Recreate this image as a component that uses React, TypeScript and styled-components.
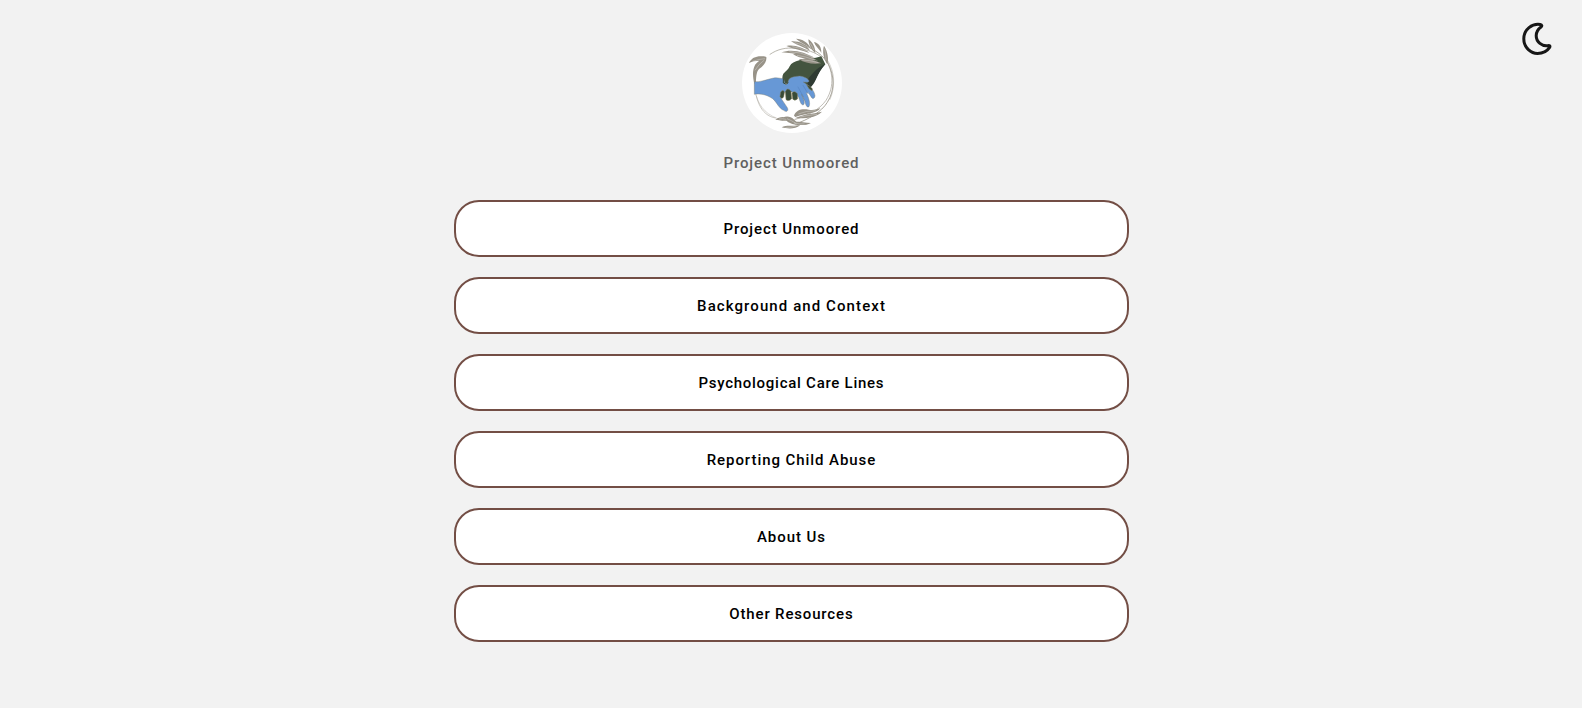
import React from "react";
import styled, { createGlobalStyle } from "styled-components";

const GlobalStyle = createGlobalStyle`
  * { box-sizing: border-box; }
  body {
    margin: 0;
    background: #f2f2f2;
    font-family: Roboto, "Liberation Sans", sans-serif;
  }
`;

const Page = styled.main`
  position: relative;
  min-height: 708px;
  display: flex;
  flex-direction: column;
  align-items: center;
  padding-top: 33px;
`;

const ThemeToggle = styled.button`
  position: absolute;
  top: 19px;
  right: 25px;
  width: 40px;
  height: 40px;
  padding: 0;
  border: 0;
  background: none;
  svg { display: block; }
`;

const Avatar = styled.div`
  width: 100px;
  height: 100px;
  margin-left: 2px;
  border-radius: 50%;
  background: #fff;
  overflow: hidden;
  svg { display: block; }
`;

const Label = styled.span<{ $spacing: number }>`
  font-size: 15px;
  font-weight: 500;
  line-height: 20px;
  letter-spacing: ${(p) => p.$spacing}px;
  margin-right: ${(p) => -p.$spacing}px;
  white-space: nowrap;
`;

const Title = styled.h1`
  display: flex;
  margin: 20px 0 27px;
  color: #606060;
`;

const Links = styled.nav`
  width: 675px;
  display: flex;
  flex-direction: column;
  gap: 20px;
`;

const LinkButton = styled.a`
  display: flex;
  align-items: center;
  justify-content: center;
  height: 57px;
  border: 2px solid #734e45;
  border-radius: 25px;
  background: #fff;
  color: #000;
`;

const links = [
  { text: "Project Unmoored", spacing: 0.91 },
  { text: "Background and Context", spacing: 1.09 },
  { text: "Psychological Care Lines", spacing: 0.74 },
  { text: "Reporting Child Abuse", spacing: 0.93 },
  { text: "About Us", spacing: 0.95 },
  { text: "Other Resources", spacing: 0.84 },
];

const Logo = () => (
  <svg width="100" height="100" viewBox="18 14 300 300" role="img" aria-label="Project Unmoored">
    <g fill="none" stroke="#aaa69c" strokeLinecap="round">
      <path d="M56 150C54 205 72 262 118 269" strokeWidth="1.8" />
      <path d="M61 203C72 238 92 262 140 276" strokeWidth="1.3" />
      <path d="M102 78C125 62 150 57 178 60C210 62 240 72 258 88" strokeWidth="2.4" />
      <path d="M208 52C240 66 262 82 276 106C296 142 297 186 274 222C257 250 217 274 178 287" strokeWidth="3" />
      <path d="M266 84C290 125 298 172 270 216C250 245 213 262 176 274" strokeWidth="2.2" />
      <path d="M276 98C297 133 298 176 282 213" strokeWidth="1.6" />
    </g>
    <path fill="#43543f" d="M142 136C150 128 158 122 161 114C166 104 176 100 190 96C208 90 235 92 256 84L268 108C256 120 250 130 243 144C236 158 230 168 219 178L190 168L142 164C138 153 138 143 142 136Z" />
    <path fill="#2f3b33" d="M268 107C254 123 247 138 239 155C234 166 228 174 220 180L212 158C226 139 240 120 268 107Z" />
    <g fill="#989388">
      <path d="M39 104C46 90 58 84 74 84C82 83 88 84 91 86C93 101 82 113 69 122C61 131 60 146 60 166L55 166C50 146 49 127 56 112C59 106 63 102 70 97C58 97 49 99 39 104Z" />
      <path d="M165 39C188 37 211 47 222 67C203 56 184 51 165 39ZM151 53C174 48 202 57 220 74C196 65 172 62 151 53ZM180 31C199 31 216 42 225 61C212 50 196 44 180 31ZM217 33C230 41 238 56 238 75C227 64 218 52 217 33ZM234 41C250 45 256 56 256 74C250 61 239 56 234 41ZM264 52C275 69 279 92 274 108C263 92 258 70 264 52Z" />
      <path d="M136 72C168 60 207 71 237 89C206 82 181 76 136 72ZM171 78C195 75 222 82 246 97C216 93 194 91 171 78ZM188 93C209 88 232 92 256 105C230 109 207 104 188 93Z" />
      <path d="M174 262C180 244 199 240 218 244C230 246 242 244 253 239C242 257 216 252 178 266ZM177 270C199 257 230 257 258 250C238 270 209 270 177 270ZM118 274C131 263 147 264 164 272C151 281 137 276 118 274ZM141 268C150 262 165 264 173 273C180 280 189 286 198 290C178 290 160 288 141 268ZM137 297C151 288 169 295 193 290C177 304 153 301 137 297ZM156 282C181 276 204 284 225 284C203 295 179 290 156 282Z" />
    </g>
    <g fill="none" stroke="#fff" strokeWidth="0.9">
      <path d="M50 99Q69 92 87 91M57 126Q68 107 85 95M176 43Q197 47 211 57M169 55Q190 57 211 68M222 44Q230 55 233 65M266 61Q270 80 270 96M160 70Q192 70 229 86M183 81Q207 84 237 95M199 95Q220 95 247 103M187 257Q210 247 239 247M193 266Q215 261 243 258M129 272Q140 270 151 273M153 271Q166 276 181 286M148 297Q164 298 180 293M174 284Q191 288 206 287" />
    </g>
    <path fill="#6798d6" stroke="#817d6d" strokeWidth="1.2" strokeLinejoin="round" d="M55 160C73 162 89 154 113 149C125 147 134 151 143 151L147 166Q154 173 157 157C160 147 174 144 191 143C203 144 220 152 219 159C218 164 209 161 202 161C217 171 235 184 237 202C236 213 228 212 225 205L216 192L211 194C218 207 224 225 219 235C212 239 209 229 207 220L197 198C202 211 207 220 204 228C196 235 192 218 188 207L175 193L159 189L139 194L136 211L154 238C159 248 151 253 143 246C129 241 122 221 110 211C96 202 78 194 55 198Z" />
    <path d="M186 176L202 205M201 171L216 196" fill="none" stroke="#5685c2" strokeWidth="2" strokeLinecap="round" />
    <g fill="#394b38" stroke="#8e8460" strokeWidth="1.5">
      <path d="M134 191Q144 181 145 194L143 206Q136 215 132 204Z" />
      <path d="M148 190Q154 174 165 189L167 210Q161 221 150 214Z" />
      <path d="M168 194Q176 185 184 196L185 211Q176 220 170 212Z" />
      <path d="M212 169Q222 172 229 181L228 187L219 181Z" />
    </g>
    <path d="M142 150L142 164Q151 171 157 163" fill="none" stroke="#354638" strokeWidth="3" />
  </svg>
);

export default function App() {
  return (
    <>
      <GlobalStyle />
      <Page>
        <ThemeToggle aria-label="Toggle dark mode">
          <svg width="40" height="40" viewBox="0 0 40 40">
            <path
              d="M23.3 5.5C15.2 4.2 6.8 10.4 6.8 19.8S14.4 34.4 20.5 34.4C26 34.4 30.4 31.8 32.6 28.4C33.4 27 32.6 26.3 31 26.6C25 27.6 19.2 23 19.2 16.8C19.2 12.8 21.2 10 24 8C25.3 7 24.9 5.8 23.3 5.5Z"
              fill="none"
              stroke="#171717"
              strokeWidth="3"
              strokeLinejoin="round"
            />
          </svg>
        </ThemeToggle>
        <Avatar>
          <Logo />
        </Avatar>
        <Title>
          <Label $spacing={0.91}>Project Unmoored</Label>
        </Title>
        <Links>
          {links.map((link) => (
            <LinkButton key={link.text}>
              <Label $spacing={link.spacing}>{link.text}</Label>
            </LinkButton>
          ))}
        </Links>
      </Page>
    </>
  );
}
